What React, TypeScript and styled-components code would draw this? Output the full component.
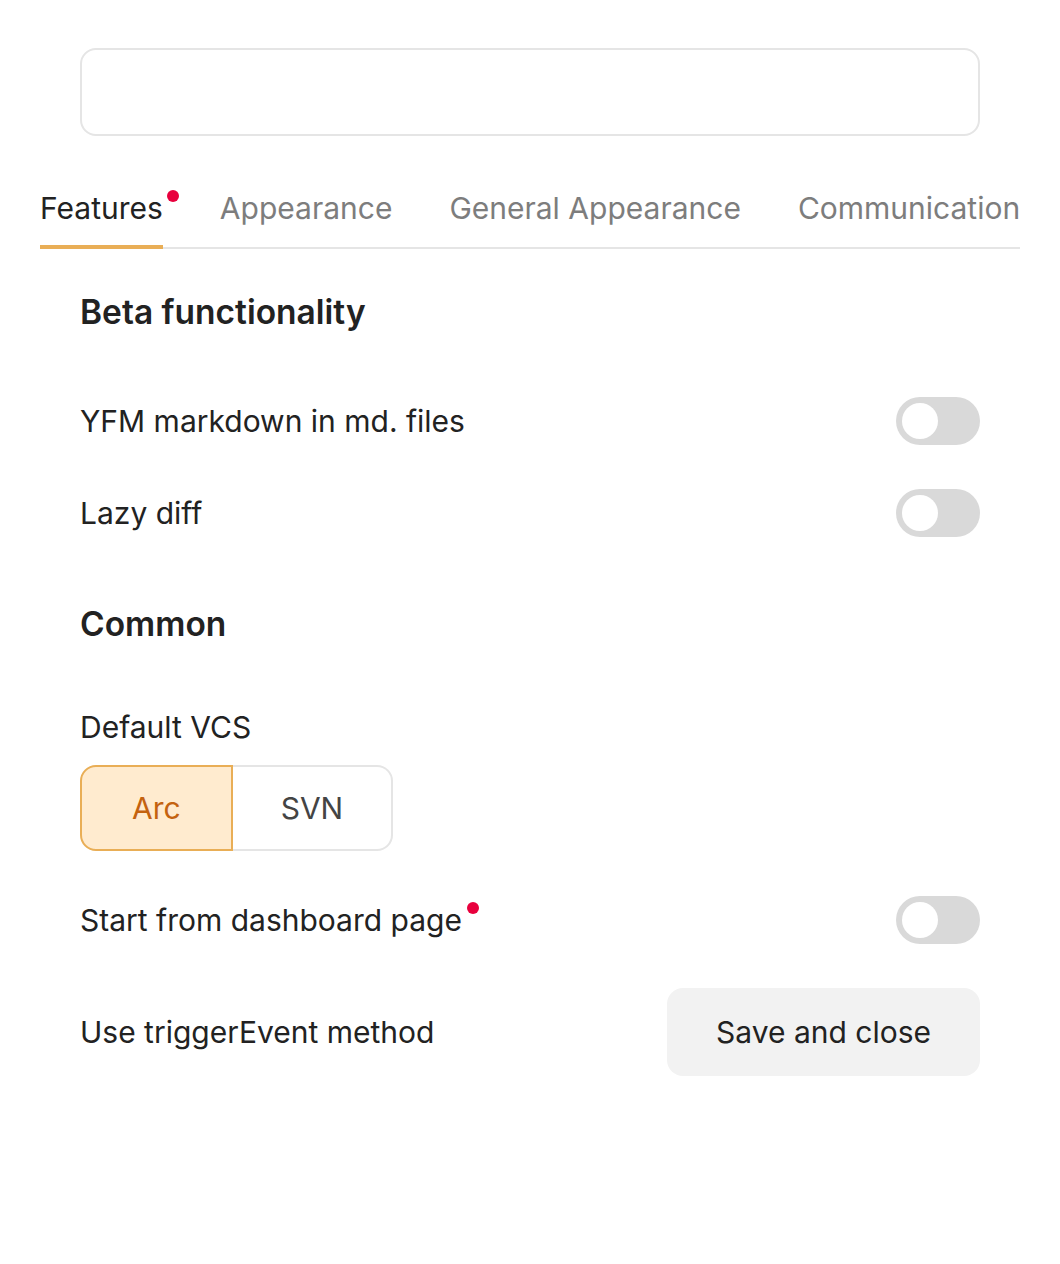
import { useState } from 'react';
import styled, { createGlobalStyle } from 'styled-components';

const GlobalStyle = createGlobalStyle`
  body {
    margin: 0;
    background: #fff;
    font-family: Inter, "Noto Sans", sans-serif;
    color: #222;
  }
  * { box-sizing: border-box; }
`;

const Page = styled.div`
  padding: 48px 40px 0;
  display: flex;
  flex-direction: column;
`;

const SearchInput = styled.input`
  margin: 0 40px;
  height: 88px;
  border: 2px solid #e5e5e5;
  border-radius: 16px;
  padding: 0 22px;
  font: inherit;
  font-size: 30px;
  outline: none;
`;

const TabList = styled.div`
  margin-top: 41px;
  display: flex;
  gap: 57px;
  border-bottom: 2px solid #e5e5e5;
`;

const Tab = styled.div<{ $active?: boolean }>`
  position: relative;
  height: 72px;
  display: flex;
  align-items: center;
  font-size: 30px;
  line-height: 36px;
  white-space: nowrap;
  color: ${(p) => (p.$active ? '#222' : '#7d7d7d')};
  margin-bottom: -2px;
  border-bottom: 4px solid ${(p) => (p.$active ? '#e9ae56' : 'transparent')};
  padding-bottom: 7px;
`;

const Dot = styled.span`
  position: absolute;
  right: -16px;
  top: 13px;
  width: 12px;
  height: 12px;
  border-radius: 50%;
  background: #e8003d;
`;

const Content = styled.div`
  padding: 40px 40px 0;
  display: flex;
  flex-direction: column;
`;

const Heading = styled.h2<{ $first?: boolean }>`
  margin: ${(p) => (p.$first ? '0' : '64px')} 0 60px;
  font-size: 33.5px;
  line-height: 46px;
  padding-bottom: 2px;
  font-weight: 600;
`;

const Row = styled.div`
  display: flex;
  align-items: center;
  justify-content: space-between;
  min-height: 48px;
  & + & {
    margin-top: 44px;
  }
`;

const Label = styled.span`
  position: relative;
  font-size: 30px;
  line-height: 36px;
`;

const LabelDot = styled(Dot)`
  top: 0;
  right: -17px;
`;

const Track = styled.button<{ $on: boolean }>`
  width: 84px;
  height: 48px;
  border: none;
  padding: 0;
  border-radius: 24px;
  background: ${(p) => (p.$on ? '#e9ae56' : '#d9d9d9')};
  position: relative;
  cursor: pointer;
`;

const Knob = styled.span<{ $on: boolean }>`
  position: absolute;
  top: 6px;
  left: ${(p) => (p.$on ? '42px' : '6px')};
  width: 36px;
  height: 36px;
  border-radius: 50%;
  background: #fff;
`;

const Field = styled.div`
  display: flex;
  flex-direction: column;
  gap: 20px;
  margin-bottom: 45px;
`;

const Segmented = styled.div`
  display: flex;
  align-self: flex-start;
  height: 86px;
`;

const Segment = styled.button<{ $active?: boolean }>`
  font: inherit;
  font-size: 30px;
  padding: 0 50px;
  cursor: pointer;
  background: ${(p) => (p.$active ? '#ffebcf' : '#fff')};
  color: ${(p) => (p.$active ? '#c4620f' : '#444')};
  border: 2px solid ${(p) => (p.$active ? '#e9ae56' : '#e5e5e5')};
  &:first-child {
    border-radius: 16px 0 0 16px;
  }
  &:last-child {
    border-radius: 0 16px 16px 0;
    border-left: none;
    padding: 0 48px;
  }
`;

const SaveButton = styled.button`
  font: inherit;
  font-size: 30px;
  color: #222;
  background: #f2f2f2;
  border: none;
  border-radius: 16px;
  height: 88px;
  padding: 0 49px;
  cursor: pointer;
`;

function Switch() {
  const [on, setOn] = useState(false);
  return (
    <Track $on={on} onClick={() => setOn(!on)}>
      <Knob $on={on} />
    </Track>
  );
}

export default function App() {
  const [vcs, setVcs] = useState('Arc');
  return (
    <>
      <GlobalStyle />
      <Page>
        <SearchInput />
        <TabList>
          <Tab $active>
            Features
            <Dot />
          </Tab>
          <Tab>Appearance</Tab>
          <Tab>General Appearance</Tab>
          <Tab>Communication</Tab>
        </TabList>
        <Content>
          <Heading $first>Beta functionality</Heading>
          <Row>
            <Label>YFM markdown in md. files</Label>
            <Switch />
          </Row>
          <Row>
            <Label>Lazy diff</Label>
            <Switch />
          </Row>
          <Heading>Common</Heading>
          <Field>
            <Label>Default VCS</Label>
            <Segmented>
              {['Arc', 'SVN'].map((v) => (
                <Segment key={v} $active={vcs === v} onClick={() => setVcs(v)}>
                  {v}
                </Segment>
              ))}
            </Segmented>
          </Field>
          <Row>
            <Label>
              Start from dashboard page
              <LabelDot />
            </Label>
            <Switch />
          </Row>
          <Row>
            <Label>Use triggerEvent method</Label>
            <SaveButton>Save and close</SaveButton>
          </Row>
        </Content>
      </Page>
    </>
  );
}
